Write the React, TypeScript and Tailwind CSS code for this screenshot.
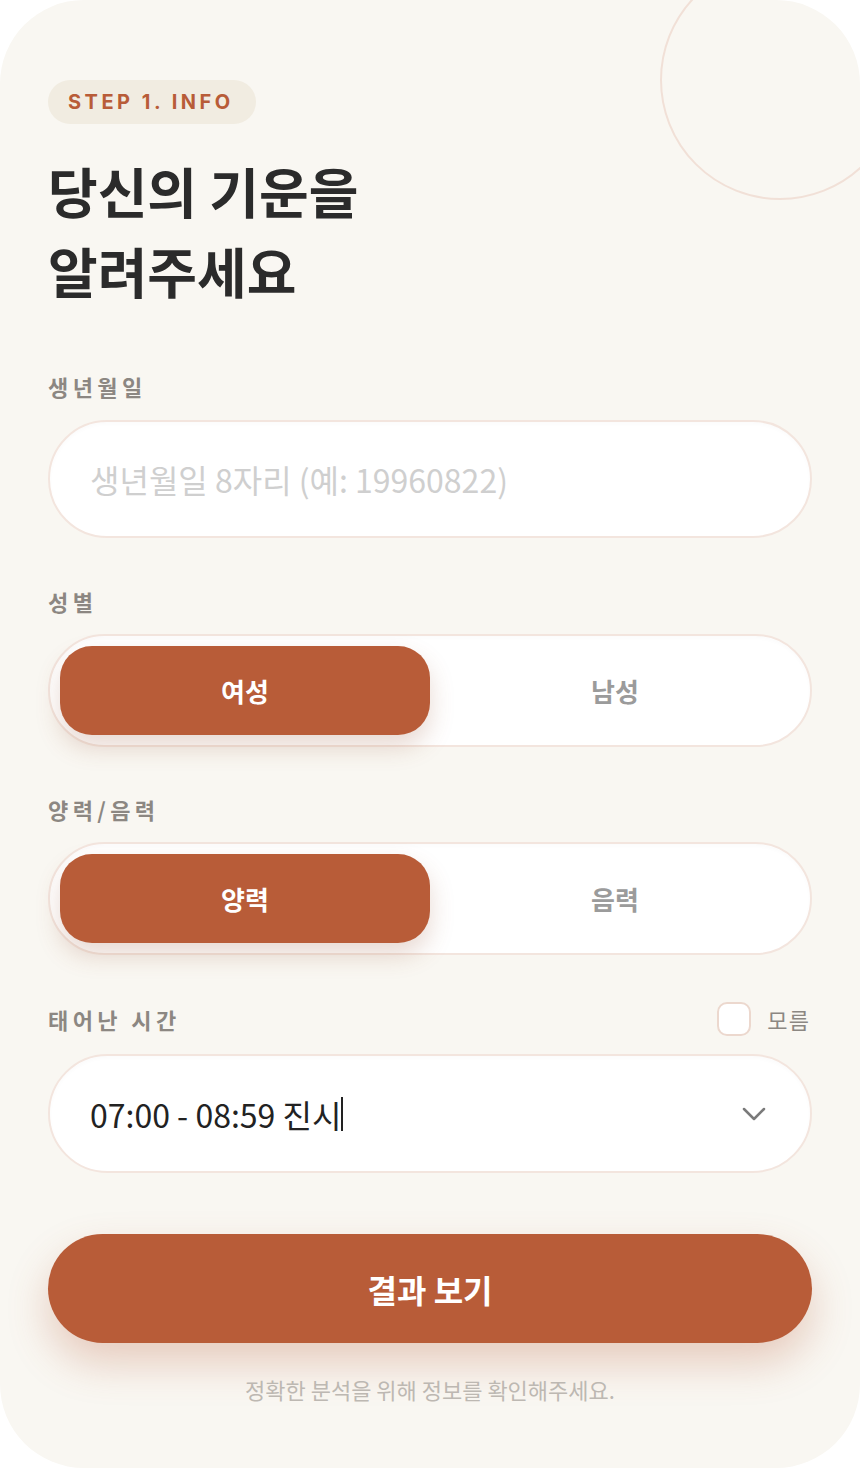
import { useState } from "react";

const FONT = { fontFamily: '"Noto Sans CJK KR", "Noto Sans", sans-serif' };

// Segmented toggle used for gender and calendar type
function Toggle({ options, value, onChange }: { options: string[]; value: string; onChange: (v: string) => void }) {
  return (
    <div className="mt-[17px] grid h-[113px] grid-cols-2 rounded-full border-2 border-[#f3e5de] bg-white p-[10px] shadow-[inset_0_2px_4px_rgba(0,0,0,0.02)]">
      {options.map((opt) => {
        const active = opt === value;
        return (
          <button
            key={opt}
            onClick={() => onChange(opt)}
            className={
              active
                ? "rounded-[32px] bg-[#b85c38] text-[26px] font-bold text-white shadow-[0_12px_24px_rgba(150,80,50,0.22)]"
                : "rounded-[32px] text-[26px] font-bold text-[#9b9b9b]"
            }
          >
            {opt}
          </button>
        );
      })}
    </div>
  );
}

function Label({ children }: { children: React.ReactNode }) {
  return <div className="h-8 text-[22px] font-bold leading-8 tracking-[0.2em] text-[#8c8782]">{children}</div>;
}

export default function App() {
  const [gender, setGender] = useState("여성");
  const [calendar, setCalendar] = useState("양력");
  const [unknown, setUnknown] = useState(false);

  return (
    <div className="h-[1468px] w-[860px] bg-white" style={FONT}>
      <div className="relative h-full overflow-hidden rounded-[84px] bg-[#f9f7f2] px-12 pt-[80px]">
        {/* decorative ring */}
        <div className="absolute right-[-40px] top-[-40px] h-[240px] w-[240px] rounded-full border-2 border-[#f1e0d7]" />

        <div
          className="inline-flex h-[44px] items-center rounded-full bg-[#f1ece1] pl-5 pr-[22px] text-[20px] font-bold tracking-[0.175em] text-[#b85c38]"
          style={{ fontFamily: 'Inter, "Noto Sans CJK KR", sans-serif' }}
        >
          STEP 1. INFO
        </div>

        <h1 className="mt-[27px] text-[54px] font-bold leading-[80px] text-[#2b2b2b]">
          당신의 기운을
          <br />
          알려주세요
        </h1>

        <div className="mt-[59px]">
          <Label>생년월일</Label>
          <input
            placeholder="생년월일 8자리 (예: 19960822)"
            className="mt-[18px] h-[118px] w-full rounded-full border-2 border-[#f3e5de] bg-white px-10 text-[32px] text-[#2b2b2b] shadow-[inset_0_2px_4px_rgba(0,0,0,0.02)] outline-none placeholder:text-[#cfcfcf]"
          />
        </div>

        <div className="mt-[47px]">
          <Label>성별</Label>
          <Toggle options={["여성", "남성"]} value={gender} onChange={setGender} />
        </div>

        <div className="mt-[46px]">
          <Label>양력/음력</Label>
          <Toggle options={["양력", "음력"]} value={calendar} onChange={setCalendar} />
        </div>

        <div className="mt-[47px]">
          <div className="flex items-center justify-between">
            <Label>태어난 시간</Label>
            <label className="flex items-center gap-4 pr-[2px]">
              <button
                onClick={() => setUnknown(!unknown)}
                className="h-[34px] w-[34px] rounded-[10px] border-2 border-[#ecd8ce] bg-white"
              />
              <span className="text-[22px] tracking-[0.05em] text-[#8c8782]">모름</span>
            </label>
          </div>
          <div className="mt-[18px] flex h-[119px] items-center justify-between rounded-full border-2 border-[#f3e5de] bg-white pl-10 pr-[44px] shadow-[inset_0_2px_4px_rgba(0,0,0,0.02)]">
            <div className="flex items-center text-[32px] text-[#222]">
              07:00 - 08:59 진시
              <span className="h-[34px] w-[2px] bg-[#222]" />
            </div>
            <svg width="24" height="14" viewBox="0 0 24 14" fill="none">
              <path d="M2 2l10 10 10-10" stroke="#7a7a7a" strokeWidth="2.5" strokeLinecap="round" strokeLinejoin="round" />
            </svg>
          </div>
        </div>

        <button className="mt-[61px] h-[109px] w-full rounded-full bg-[#b85c38] text-[32px] font-bold text-white shadow-[0_20px_40px_rgba(184,92,56,0.28)]">
          결과 보기
        </button>

        <p className="mt-[31px] text-center text-[22px] leading-[30px] text-[#bdb8b2]">
          정확한 분석을 위해 정보를 확인해주세요.
        </p>
      </div>
    </div>
  );
}
